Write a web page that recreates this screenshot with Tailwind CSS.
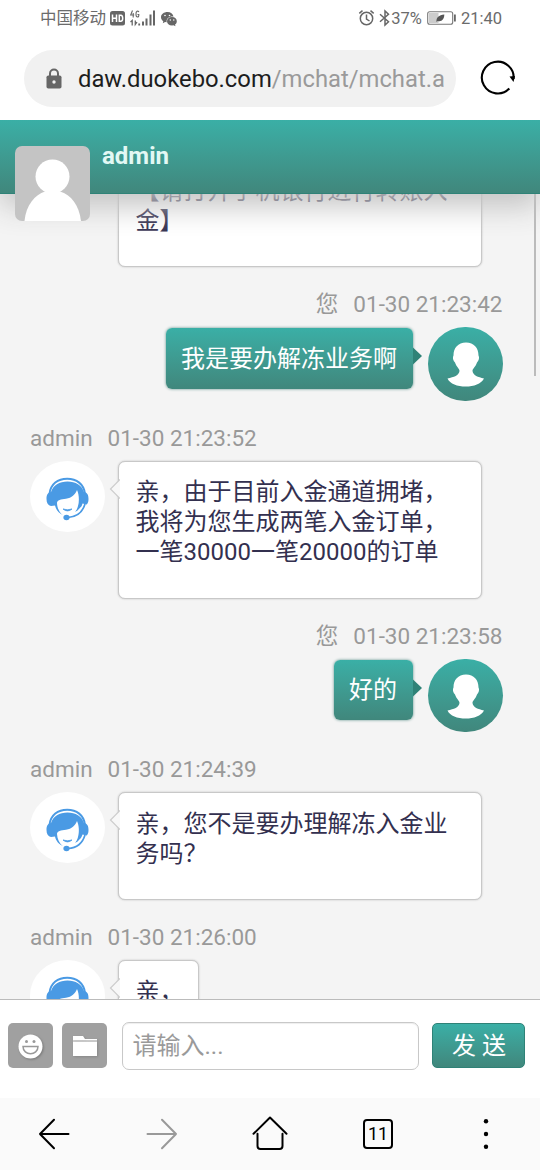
<!DOCTYPE html>
<html lang="zh-CN">
<head>
<meta charset="utf-8">
<title>mchat</title>
<script src="https://cdn.jsdelivr.net/npm/@tailwindcss/browser@4"></script>
</head>
<body class="bg-white">
<svg class="hidden">
  <symbol id="agent" viewBox="0 0 75 71">
    <ellipse cx="37.500" cy="35.500" rx="37.500" ry="35.500" fill="#fff"/>
    <path d="M19.500 33C20.500 23 28 17.700 37.200 17.700S54 23 55 33" fill="none" stroke="#4a9ae4" stroke-width="2"/>
    <path d="M21 45C18 44.500 16.500 42 16.500 38S17.500 31.500 21 31C23 24.500 29.500 20.500 37.500 20.500S52 24.500 54 31C57.500 31.500 58.500 34 58.500 38S57 44 53.500 45C51.500 45 51 46 47 50L33 54C29 52.500 26 49 25 44.500Z" fill="#4a9ae4"/>
    <path d="M27 42C27 39 31 38.500 36 37.800C42 37 45 33.500 47 29C49 33 49.500 40 48 45C47 50 43 54 38 55L33 54.500C29 51 27.300 47 27 42Z" fill="#fff"/>
    <path d="M33 48Q37.500 51.800 42 48Q37.500 49.600 33 48Z" fill="#4a9ae4" stroke="#4a9ae4" stroke-width=".8"/>
    <path d="M54.500 43C52.500 51 46 56 38 56.500" fill="none" stroke="#fff" stroke-width="4"/>
    <path d="M55 43C52.500 51.500 46 56 38 56.500" fill="none" stroke="#4a9ae4" stroke-width="1.700"/>
    <ellipse cx="36.500" cy="56.500" rx="3.100" ry="2.700" fill="#4a9ae4"/>
  </symbol>
  <symbol id="visitor" viewBox="0 0 75 74">
    <path d="M38 15.500C46 15.500 50.500 21 50.500 28.500C51.800 31 50.500 34 49 35.500C47.500 40 44.500 41.500 44.500 44C45 48.500 50 50 56 51.500C53 57 46 59.500 37.700 59.500S22 57 19.500 51.500C26 50 31 48.500 31.500 44C31.500 41.500 28.500 40 27 35.500C25.500 34 24.200 31 25.500 28.500C25.500 21 30 15.500 38 15.500Z" fill="#fff"/>
  </symbol>
</svg>

<div class="w-[540px] h-[1170px] flex flex-col overflow-hidden font-['Roboto','Noto_Sans_CJK_SC',sans-serif]">
  <!-- Status bar -->
  <div class="h-[37px] shrink-0 flex items-center justify-between pl-10 pr-[38px] text-[#6b6b6b] text-[16.500px] leading-none">
    <div class="flex items-center">
      <span class="pt-[2px]">中国移动</span>
      <svg class="ml-[4px] -mt-[1px]" width="67" height="18" viewBox="0 0 67 18" fill="#666">
        <rect x="0" y="2" width="15" height="14.500" rx="2.500"/>
        <path d="M2.500 5.500v7.500M6.500 5.500v7.500M2.500 9.200h4M9.300 6.200v6.100h1.500q1.900 0 1.900-3t-1.900-3.100z" fill="none" stroke="#fff" stroke-width="1.500"/>
        <path d="M22.500 1.500L20.700 6h3.500M23.200 4v4.500M28.800 3.200Q28.500 1.800 27 2.300Q25.800 3 26 5.500Q26 8 27.500 8T28.800 5.500H27.500" fill="none" stroke="#666" stroke-width="1.100"/>
        <path d="M20.500 13l1.700-1.500v5M27 13l-1.700 2.500v-4" fill="none" stroke="#666" stroke-width="1.300"/>
        <path d="M28.300 14.500h1.800v2h-1.800zM32 12.500h2v4h-2zM35.500 9.500h2v7h-2zM39.500 5.500h2v11h-2zM43 1.500h2v15h-2z"/>
        <path d="M57.500 3C54 3 51 5.200 51 8.200c0 1.700 1 3 2.300 4l-.5 2 2.300-1.200 1.600.3C56 9.500 59 7.200 63.500 7.500 63 4.800 60.600 3 57.500 3z"/>
        <path d="M62 8c-3 0-5 1.900-5 4.200s2 4.300 5 4.300l1.500-.2 2 1-.5-1.700c1.200-.8 1.800-1.900 1.800-3.400C66.800 9.900 65 8 62 8z"/>
        <g fill="#fff"><circle cx="55" cy="6.500" r=".8"/><circle cx="59.500" cy="6.500" r=".8"/><circle cx="60.300" cy="11" r=".7"/><circle cx="63.800" cy="11" r=".7"/></g>
      </svg>
    </div>
    <div class="flex items-center">
      <svg class="-mt-[1px]" width="33" height="18" viewBox="0 0 33 18" fill="none" stroke="#666" stroke-width="1.500">
        <circle cx="8.500" cy="9.500" r="6.200"/><path d="M8.500 5.500V10l3 2M1.300 4.300L4.500 1.700M15.700 4.300L12.500 1.700"/>
        <path d="M22 5.200l8.500 7.500L27 16V2l3.500 3.300L22 12.800" stroke-width="1.500"/>
      </svg>
      <span class="pt-[2px]">37%</span>
      <svg class="ml-[5px] -mt-[1px]" width="29" height="14" viewBox="0 0 29 14">
        <rect x=".7" y=".7" width="25" height="12.500" rx="2" fill="#fff" stroke="#777" stroke-width="1.100"/>
        <rect x="2" y="2" width="9.500" height="10" fill="#ccc"/>
        <path d="M9.500 11C9 6.500 12 4.200 17.300 3.500C17.300 8 15 11 10.700 10Z" fill="#555"/>
        <rect x="27" y="3.500" width="1.800" height="7" fill="#666"/>
      </svg>
      <span class="ml-[5px] pt-[2px]">21:40</span>
    </div>
  </div>

  <!-- Address bar -->
  <div class="h-[83px] shrink-0 flex items-start pt-[12.500px] pl-6">
    <div class="w-[432px] h-[57px] rounded-full bg-[#f1f1f1] flex items-center pl-[22px]">
      <svg width="16" height="21" viewBox="0 0 16 21"><path d="M4 8.500V5.500a4 4 0 0 1 8 0v3" fill="none" stroke="#666" stroke-width="2"/><rect x=".5" y="7.500" width="15" height="13" rx="1.800" fill="#666"/><circle cx="8" cy="14" r="1.700" fill="#f1f1f1"/></svg>
      <div class="ml-4 pt-[2px] w-[366px] overflow-hidden whitespace-nowrap text-[23.800px] leading-[32px] text-[#1d1d1d]">daw.duokebo.com<span class="text-[#9a9a9a]">/mchat/mchat.a</span></div>
    </div>
    <svg class="ml-[24px] mt-[10px]" width="36" height="36" viewBox="0 0 36 36"><path d="M29.300 28.500A15.900 15.900 0 1 1 33.600 19" fill="none" stroke="#000" stroke-width="2.100"/><path d="M29.500 16.500l5.500-.5-1.500 6z"/></svg>
  </div>

  <!-- Chat header -->
  <header class="relative z-10 h-[73.500px] shrink-0 bg-linear-to-b from-[#3aafa6] to-[#40877c] border-b-[1.500px] border-[#2f8277] shadow-[0_12px_30px_#c2c2c2] [clip-path:inset(0_0_-60px_0)] pl-[102px] pt-[20px]">
    <div class="text-[24px] leading-[32px] font-bold text-[#e2f8f4]">admin</div>
    <svg class="absolute left-[15px] top-[26px] rounded-[7px]" width="75" height="75" viewBox="0 0 75 75"><rect width="75" height="75" fill="#c4c4c4"/><circle cx="37.500" cy="30.500" r="17" fill="#fff"/><path d="M9.500 75C11 59 20 48.500 30 45.500H45C56 48.500 64 59 66 75Z" fill="#fff"/></svg>
  </header>

  <!-- Messages -->
  <main class="relative h-[805.500px] shrink-0 bg-[#f4f4f4] overflow-hidden text-[24px] leading-[30px] text-[#33304f] pl-[30px] pr-[37.500px]">
    <div class="-mt-[34.500px] ml-[88px] w-[364px] h-[108px] rounded-[7px] border-[1.500px] border-[#c8c8c8] bg-white shadow-[0_0_2px_#bbb] pl-[16.500px] pt-[15.500px]">【请打开手机银行进行转账入<br>金】</div>

    <div class="h-[60px] pt-[22px] flex justify-end gap-[15px] text-[22.500px] text-[#999]"><span>您</span><span>01-30 21:23:42</span></div>
    <div class="h-[73.500px] flex justify-end items-start">
      <div class="mt-[1px] h-[60.500px] px-[15.500px] pt-[15.500px] rounded-[6px] bg-linear-to-b from-[#3aafa6] to-[#40877c] text-white shadow-[0_0_3px_#5a8f88]">我是要办解冻业务啊</div>
      <svg class="mt-[19px] mr-[6px]" width="9" height="20" viewBox="0 0 9 20"><path d="M0 1.500L9 10L0 18.500Z" fill="#2f8277"/></svg>
      <div class="w-[75px] h-[73.500px] rounded-full bg-linear-to-b from-[#3aafa6] to-[#40877c]"><svg width="75" height="74"><use href="#visitor"/></svg></div>
    </div>

    <div class="h-[60px] pt-[22px] flex gap-[15px] text-[22.500px] text-[#999]"><span>admin</span><span>01-30 21:23:52</span></div>
    <div class="h-[138px] flex items-start">
      <svg width="75" height="71"><use href="#agent"/></svg>
      <svg class="relative z-10 ml-[4px] mt-[18px] -mr-[2px]" width="11" height="20" viewBox="0 0 11 20"><path d="M11 .5L1.500 10L11 19.500" fill="#f8f8f8" stroke="#ccc" stroke-width="1.200"/></svg>
      <div class="w-[364px] h-[138px] rounded-[7px] border-[1.500px] border-[#c8c8c8] bg-white shadow-[0_0_2px_#bbb] pl-[16.500px] pt-[15.500px]">亲，由于目前入金通道拥堵，<br>我将为您生成两笔入金订单，<br>一笔30000一笔20000的订单</div>
    </div>

    <div class="h-[60px] pt-[22px] flex justify-end gap-[15px] text-[22.500px] text-[#999]"><span>您</span><span>01-30 21:23:58</span></div>
    <div class="h-[73.500px] flex justify-end items-start">
      <div class="mt-[1px] h-[60.500px] px-[15.500px] pt-[15.500px] rounded-[6px] bg-linear-to-b from-[#3aafa6] to-[#40877c] text-white shadow-[0_0_3px_#5a8f88]">好的</div>
      <svg class="mt-[19px] mr-[6px]" width="9" height="20" viewBox="0 0 9 20"><path d="M0 1.500L9 10L0 18.500Z" fill="#2f8277"/></svg>
      <div class="w-[75px] h-[73.500px] rounded-full bg-linear-to-b from-[#3aafa6] to-[#40877c]"><svg width="75" height="74"><use href="#visitor"/></svg></div>
    </div>

    <div class="h-[60px] pt-[22px] flex gap-[15px] text-[22.500px] text-[#999]"><span>admin</span><span>01-30 21:24:39</span></div>
    <div class="h-[108px] flex items-start">
      <svg width="75" height="71"><use href="#agent"/></svg>
      <svg class="relative z-10 ml-[4px] mt-[18px] -mr-[2px]" width="11" height="20" viewBox="0 0 11 20"><path d="M11 .5L1.500 10L11 19.500" fill="#f8f8f8" stroke="#ccc" stroke-width="1.200"/></svg>
      <div class="w-[364px] h-[108px] rounded-[7px] border-[1.500px] border-[#c8c8c8] bg-white shadow-[0_0_2px_#bbb] pl-[16.500px] pt-[15.500px]">亲，您不是要办理解冻入金业<br>务吗？</div>
    </div>

    <div class="h-[60px] pt-[22px] flex gap-[15px] text-[22.500px] text-[#999]"><span>admin</span><span>01-30 21:26:00</span></div>
    <div class="h-[108px] flex items-start">
      <svg width="75" height="71"><use href="#agent"/></svg>
      <svg class="relative z-10 ml-[4px] mt-[18px] -mr-[2px]" width="11" height="20" viewBox="0 0 11 20"><path d="M11 .5L1.500 10L11 19.500" fill="#f8f8f8" stroke="#ccc" stroke-width="1.200"/></svg>
      <div class="w-[81px] h-[108px] rounded-[7px] border-[1.500px] border-[#c8c8c8] bg-white shadow-[0_0_2px_#bbb] pl-[16.500px] pt-[15.500px]">亲，</div>
    </div>
    <div class="absolute right-[4px] top-0 w-[2px] h-[182px] bg-[#bbb]"></div>
  </main>

  <!-- Composer -->
  <div class="h-[99px] shrink-0 border-t border-[#bbb] bg-white flex items-start pl-[7.500px] pt-[22px]">
    <div class="w-[45px] h-[45px] mt-[1px] rounded-[5px] bg-[#a0a0a0] flex items-center justify-center">
      <svg class="ml-[1px] mt-[2px] drop-shadow-[1px_1px_1px_#777]" width="25" height="25" viewBox="0 0 25 25"><circle cx="12.500" cy="12.500" r="12" fill="#fff"/><g fill="#999"><circle cx="8.500" cy="7.500" r="1.500"/><circle cx="16" cy="7.500" r="1.500"/></g><path d="M5 12.500H20C20 22 5 22 5 12.500Z" fill="#fff" stroke="#999" stroke-width="1.500"/></svg>
    </div>
    <div class="w-[45px] h-[45px] mt-[1px] ml-[9px] rounded-[5px] bg-[#a0a0a0] flex items-center justify-center">
      <svg class="ml-[1px] mt-[1px] drop-shadow-[1px_1px_1px_#888]" width="24" height="20" viewBox="0 0 24 20" fill="#fff"><path d="M0 4V0H10l2 3H24v1.500H0zM0 5.500H24V20H0z"/></svg>
    </div>
    <div class="w-[297px] h-[48px] ml-[15px] rounded-[7px] border-[1.500px] border-[#c8c8c8] flex items-center pl-[10px] pb-[1px] text-[24px] leading-[30px] text-[#9a9a9a] shadow-[inset_0_1px_1px_#eee]">请输入...</div>
    <div class="w-[93px] h-[45px] mt-[1px] ml-[13.500px] rounded-[5px] border border-[#2f8277] bg-linear-to-b from-[#3aafa6] to-[#40877c] text-white text-[24px] leading-[30px] text-center pt-[7px] pl-[1px]">发 送</div>
  </div>

  <!-- Browser toolbar -->
  <nav class="h-[72px] shrink-0 bg-[#fafafa] grid grid-cols-5 place-items-center text-black">
    <svg width="32" height="32" viewBox="0 0 32 32" fill="none" stroke="currentColor" stroke-width="2" stroke-linecap="round" stroke-linejoin="round"><path d="M30.500 16H2M16 1.700L2 16l14 14.300"/></svg>
    <svg class="text-[#999]" width="32" height="32" viewBox="0 0 32 32" fill="none" stroke="currentColor" stroke-width="2" stroke-linecap="round" stroke-linejoin="round"><path d="M1.500 16H30M16 1.700L30 16 16 30.300"/></svg>
    <svg width="36" height="36" viewBox="0 0 36 36" fill="none" stroke="currentColor" stroke-width="2" stroke-linecap="round" stroke-linejoin="round"><path d="M1.500 17.800L18 1.500l16.500 16.300M5.500 17.800V30q0 3 3 3H27.500q3 0 3-3V17.800"/></svg>
    <div class="w-[30px] h-[30px] rounded-[4px] border-2 border-black flex items-center justify-center text-[18px] leading-none">11</div>
    <svg width="6" height="32" viewBox="0 0 6 32" fill="currentColor"><circle cx="3" cy="3.200" r="2.200"/><circle cx="3" cy="16" r="2.200"/><circle cx="3" cy="28.800" r="2.200"/></svg>
  </nav>
</div>
</body>
</html>
